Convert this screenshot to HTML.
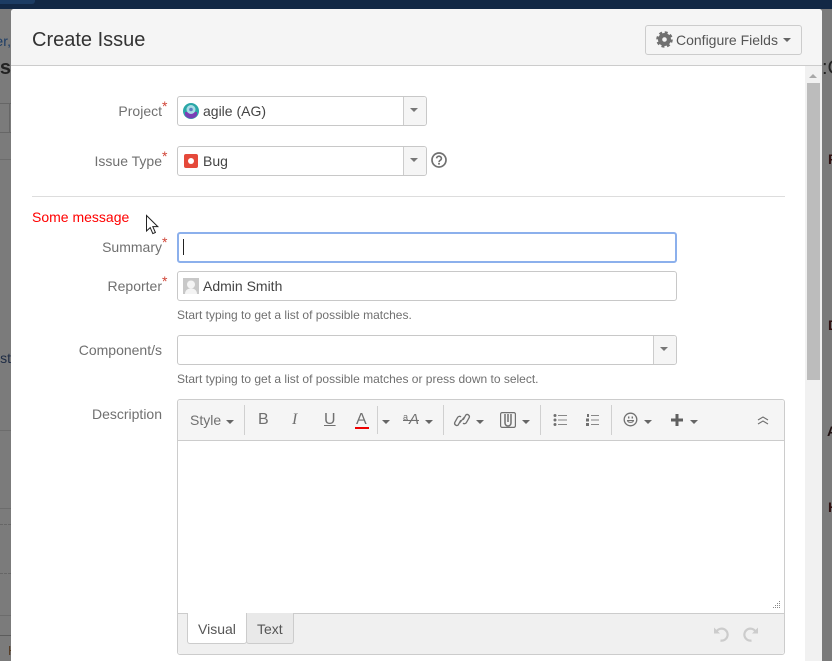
<!DOCTYPE html>
<html><head><meta charset="utf-8">
<style>
html,body{margin:0;padding:0}
body{width:832px;height:661px;overflow:hidden;position:relative;background:#7b7b7b;font-family:"Liberation Sans",sans-serif;font-size:14px;color:#333}
div,span{position:absolute;white-space:nowrap;box-sizing:border-box}
svg{position:absolute;overflow:visible}
.lbl{right:670px;color:#707070;line-height:20px;text-align:right}
.ast{color:#d04437;font-size:14px;line-height:14px}
.inp{background:#fff;border:1px solid #c8c8c8;border-radius:3px}
.dd{background:#f5f5f5;border-left:1px solid #ccc;border-radius:0 3px 3px 0;top:0;bottom:0;right:0;width:23px}
.car{width:0;height:0;border-left:4px solid transparent;border-right:4px solid transparent;border-top:4px solid #666}
.hint{font-size:12px;color:#707070;left:177px;line-height:16px}
.tb{color:#707070;line-height:20px}
.sep{width:1px;background:#d0d0d0;top:405px;height:30px}
</style></head><body>
<div style="left:0;top:0;width:832px;height:9px;background:#122845"></div>
<div style="left:0;top:0;width:35px;height:4px;background:#1c3c63;border-radius:0 0 3px 0"></div>
<div style="right:821px;top:31px;color:#1d3d66;line-height:20px">Filter,</div>
<div style="right:821px;top:56px;color:#222;font-size:20px;line-height:24px;font-weight:bold">Is</div>
<div style="left:0;top:103px;width:11px;height:30px;border-top:1px solid #666;border-bottom:1px solid #666"></div>
<div style="left:9px;top:103px;width:1px;height:30px;background:#666"></div>
<div style="left:0;top:159px;width:11px;height:1px;background:#6c6c6c"></div>
<div style="right:821px;top:348px;color:#1d2b44;line-height:20px">List</div>
<div style="left:0;top:430px;width:11px;height:1px;background:#6c6c6c"></div>
<div style="left:0;top:508px;width:11px;height:1px;background:#6c6c6c"></div>
<div style="left:0;top:524px;width:11px;height:0;border-top:1px dashed #666"></div>
<div style="left:0;top:573px;width:11px;height:0;border-top:1px dashed #666"></div>
<div style="left:0;top:615px;width:11px;height:1px;background:#6c6c6c"></div>
<div style="left:0;top:635px;width:11px;height:1px;background:#5c5c5c"></div>
<div style="left:8px;top:642px;color:#553a20;font-size:13px;line-height:18px">H</div>
<div style="left:822px;top:56px;color:#222;font-size:20px;line-height:24px">:C</div>
<div style="left:828px;top:150px;color:#301010;font-weight:bold;line-height:18px">F</div>
<div style="left:828px;top:316px;color:#301010;font-weight:bold;line-height:18px">D</div>
<div style="left:827px;top:422px;color:#201010;font-weight:bold;line-height:18px">A</div>
<div style="left:828px;top:498px;color:#301010;font-weight:bold;line-height:18px">H</div>

<div style="left:11px;top:9px;width:811px;height:652px;background:#fff;border-radius:3px 3px 0 0;overflow:hidden">
 <div style="left:0;top:0;width:811px;height:57px;background:#f5f5f5;border-bottom:1px solid #ccc"></div>
 <div style="left:794px;top:57px;width:17px;height:595px;background:#f1f1f1"></div>
 <div style="left:796px;top:74px;width:13px;height:297px;background:#bcbcbc"></div>
 <div style="left:798px;top:65px;width:0;height:0;border-left:4px solid transparent;border-right:4px solid transparent;border-bottom:4px solid #a8a8a8"></div>
</div>
<div style="left:32px;top:27px;font-size:20px;line-height:26px;color:#333">Create Issue</div>

<div style="left:645px;top:25px;width:157px;height:30px;background:#f5f5f5;border:1px solid #ccc;border-radius:3px"></div>
<svg style="left:656px;top:31px" width="17" height="17" viewBox="0 0 17 17"><circle cx="8.5" cy="8.5" r="4.4" fill="none" stroke="#707070" stroke-width="4.2"/><circle cx="8.5" cy="8.5" r="7" fill="none" stroke="#707070" stroke-width="2.6" stroke-dasharray="2.9 2.6"/></svg>
<div style="left:676px;top:30px;color:#555;line-height:20px">Configure Fields</div>
<div class="car" style="left:783px;top:38px"></div>

<div class="lbl" style="top:101px">Project</div><div class="ast" style="left:162px;top:99px">*</div>
<div class="inp" style="left:177px;top:96px;width:250px;height:30px"><div class="dd"></div></div>
<div class="car" style="left:410px;top:108px;border-top-color:#777"></div>
<svg style="left:183px;top:103px" width="16" height="16" viewBox="0 0 16 16"><circle cx="8" cy="8" r="8" fill="#2aa7a7"/><path d="M2 9h12v2a6 4.500 0 0 1-12 0z" fill="#7a3fb5"/><circle cx="8" cy="6.500" r="4.500" fill="#a9dde6"/><circle cx="8" cy="6.500" r="1.800" fill="#5a7fc0"/></svg>
<div style="left:203px;top:101px;color:#444;line-height:20px">agile (AG)</div>

<div class="lbl" style="top:151px">Issue Type</div><div class="ast" style="left:162px;top:149px">*</div>
<div class="inp" style="left:177px;top:146px;width:250px;height:30px"><div class="dd"></div></div>
<div class="car" style="left:410px;top:158px;border-top-color:#777"></div>
<svg style="left:184px;top:154px" width="14" height="14" viewBox="0 0 14 14"><rect width="14" height="14" rx="2" fill="#e5493a"/><circle cx="7" cy="7" r="3" fill="#fff"/></svg>
<div style="left:203px;top:151px;color:#444;line-height:20px">Bug</div>
<svg style="left:431px;top:152px" width="16" height="16" viewBox="0 0 16 16"><circle cx="8" cy="8" r="7" fill="none" stroke="#707070" stroke-width="1.7"/><path d="M5.600 6.300a2.400 2.200 0 1 1 3.600 2c-.8.500-1.200.800-1.200 1.700" fill="none" stroke="#707070" stroke-width="1.600"/><rect x="7.100" y="10.800" width="1.800" height="1.800" fill="#707070"/></svg>

<div style="left:32px;top:196px;width:753px;height:1px;background:#ddd"></div>
<div style="left:32px;top:207px;color:#f00;line-height:20px">Some message</div>

<div class="lbl" style="top:237px">Summary</div><div class="ast" style="left:162px;top:235px">*</div>
<div style="left:177px;top:232px;width:500px;height:31px;background:#fff;border:2px solid #8cb0ec;border-radius:3px"></div>
<div style="left:183px;top:239px;width:1px;height:16px;background:#222"></div>

<div class="lbl" style="top:276px">Reporter</div><div class="ast" style="left:162px;top:274px">*</div>
<div class="inp" style="left:177px;top:271px;width:500px;height:30px"></div>
<svg style="left:183px;top:278px" width="16" height="16" viewBox="0 0 16 16"><rect width="16" height="16" fill="#c8c8c8"/><circle cx="8" cy="6.500" r="4" fill="#f4f4f4"/><path d="M2 16c0-4 3-5.500 6-5.500s6 1.500 6 5.500z" fill="#f4f4f4"/></svg>
<div style="left:203px;top:276px;color:#444;line-height:20px">Admin Smith</div>
<div class="hint" style="top:307px">Start typing to get a list of possible matches.</div>

<div class="lbl" style="top:340px">Component/s</div>
<div class="inp" style="left:177px;top:335px;width:500px;height:30px"><div class="dd"></div></div>
<div class="car" style="left:660px;top:347px;border-top-color:#777"></div>
<div class="hint" style="top:371px">Start typing to get a list of possible matches or press down to select.</div>

<div class="lbl" style="top:404px">Description</div>
<div style="left:177px;top:399px;width:608px;height:256px;background:#fff;border:1px solid #ccc;border-radius:3px"></div>
<div style="left:178px;top:400px;width:606px;height:41px;background:#f5f5f5;border-bottom:1px solid #ccc;border-radius:3px 3px 0 0"></div>
<div style="left:178px;top:613px;width:606px;height:41px;background:#f0f0f0;border-top:1px solid #ccc;border-radius:0 0 3px 3px"></div>

<div class="tb" style="left:190px;top:410px">Style</div><div class="car" style="left:226px;top:420px"></div>
<div class="sep" style="left:244px"></div>
<div class="tb" style="left:258px;top:410px;font-size:16px">B</div>
<div class="tb" style="left:292px;top:410px;font-size:16px;font-style:italic;font-family:'Liberation Serif',serif">I</div>
<div class="tb" style="left:324px;top:410px;font-size:16px;text-decoration:underline">U</div>
<div class="tb" style="left:356px;top:410px;font-size:16px">A</div>
<div style="left:355px;top:427px;width:14px;height:2px;background:#e00"></div>
<div class="sep" style="left:377px;top:406px;height:28px"></div>
<div class="car" style="left:382px;top:420px"></div>
<div class="tb" style="left:403px;top:411px;font-size:9px;line-height:12px">a</div>
<div class="tb" style="left:409px;top:410px;font-size:15px;font-style:italic">A</div>
<div style="left:403px;top:420px;width:16px;height:1px;background:#707070"></div>
<div class="car" style="left:425px;top:420px"></div>
<div class="sep" style="left:443px"></div>
<svg style="left:454px;top:412px" width="16" height="16" viewBox="0 0 16 16" fill="none" stroke="#707070" stroke-width="1.300"><path d="M6.800 8.200l-2.600 4.800a2.200 2.200 0 0 1-3.400-2.600l2.800-5a2.200 2.200 0 0 1 3.400-.5"/><path d="M9.200 7.800l2.600-4.800a2.200 2.200 0 0 1 3.400 2.600l-2.800 5a2.200 2.200 0 0 1-3.400.5"/><path d="M5.500 11l5-6"/></svg>
<div class="car" style="left:476px;top:420px"></div>
<svg style="left:500px;top:412px" width="16" height="16" viewBox="0 0 16 16" fill="none" stroke="#707070" stroke-width="1.200"><rect x=".6" y=".6" width="14.800" height="14.800" rx="1.500"/><path d="M5 2v9a3 3 0 0 0 6 0V2M8 2v8" stroke-width="1.500"/></svg>
<div class="car" style="left:522px;top:420px"></div>
<div class="sep" style="left:540px"></div>
<svg style="left:553px;top:413px" width="15" height="14" viewBox="0 0 15 14"><g fill="#707070"><circle cx="2" cy="2.500" r="1.500"/><circle cx="2" cy="7" r="1.500"/><circle cx="2" cy="11.500" r="1.500"/></g><path d="M5 2.500h9M5 7h9M5 11.500h9" stroke="#888" stroke-width="1"/></svg>
<svg style="left:586px;top:413px" width="14" height="14" viewBox="0 0 14 14"><g fill="#707070"><rect x="1" y="1" width="2" height="3"/><rect x="0" y="5.500" width="3" height="3"/><rect x="0" y="10" width="3" height="3"/></g><path d="M5 2.500h8M5 7h8M5 11.500h8" stroke="#888" stroke-width="1"/></svg>
<div class="sep" style="left:611px"></div>
<svg style="left:623px;top:412px" width="15" height="15" viewBox="0 0 15 15" fill="none" stroke="#707070" stroke-width="1.300"><circle cx="7.500" cy="7.500" r="6.300"/><path d="M4.500 8.500c.5 2.500 5.500 2.500 6 0z" stroke-width="1"/><path d="M5.700 4.500v2M9.300 4.500v2" stroke-width="1.400"/></svg>
<div class="car" style="left:644px;top:420px"></div>
<svg style="left:671px;top:414px" width="12" height="12" viewBox="0 0 12 12"><path d="M4.500 0h3v4.500H12v3H7.500V12h-3V7.500H0v-3h4.500z" fill="#606060"/></svg>
<div class="car" style="left:690px;top:420px"></div>
<svg style="left:757px;top:416px" width="12" height="9" viewBox="0 0 12 9" fill="none" stroke="#707070" stroke-width="1.100"><path d="M1 4l5-3 5 3M1 8l5-3 5 3"/></svg>

<svg style="left:772px;top:601px" width="9" height="9" viewBox="0 0 9 9" fill="#888"><rect x="7" y="0" width="1" height="1"/><rect x="7" y="2" width="1" height="1"/><rect x="5" y="2" width="1" height="1"/><rect x="7" y="4" width="1" height="1"/><rect x="5" y="4" width="1" height="1"/><rect x="3" y="4" width="1" height="1"/><rect x="7" y="6" width="1" height="1"/><rect x="5" y="6" width="1" height="1"/><rect x="3" y="6" width="1" height="1"/><rect x="1" y="6" width="1" height="1"/></svg>

<div style="left:187px;top:613px;width:60px;height:31px;background:#fff;border:1px solid #ccc;border-top:0;border-radius:0 0 3px 3px"></div>
<div style="left:198px;top:619px;color:#555;line-height:20px">Visual</div>
<div style="left:246px;top:613px;width:48px;height:31px;background:#e9e9e9;border:1px solid #ccc;border-top:0;border-radius:0 0 3px 3px"></div>
<div style="left:257px;top:619px;color:#555;line-height:20px">Text</div>
<svg style="left:713px;top:626px" width="16" height="16" viewBox="0 0 16 16" fill="none" stroke="#ccc" stroke-width="2.200"><path d="M3.500 5.500a6 6 0 1 1 4 9"/><path d="M1 1.500v6h6z" fill="#ccc" stroke="none"/></svg>
<svg style="left:743px;top:626px" width="16" height="16" viewBox="0 0 16 16" fill="none" stroke="#ccc" stroke-width="2.200"><path d="M12.500 5.500a6 6 0 1 0-4 9"/><path d="M15 1.500v6H9z" fill="#ccc" stroke="none"/></svg>

<svg style="left:146px;top:215px" width="14" height="20" viewBox="0 0 14 20"><path d="M.5.500v15.500l3.700-3.400 2.600 6 2.600-1.100-2.600-5.900h5z" fill="#fff" stroke="#222" stroke-width="1"/></svg>
</body></html>
